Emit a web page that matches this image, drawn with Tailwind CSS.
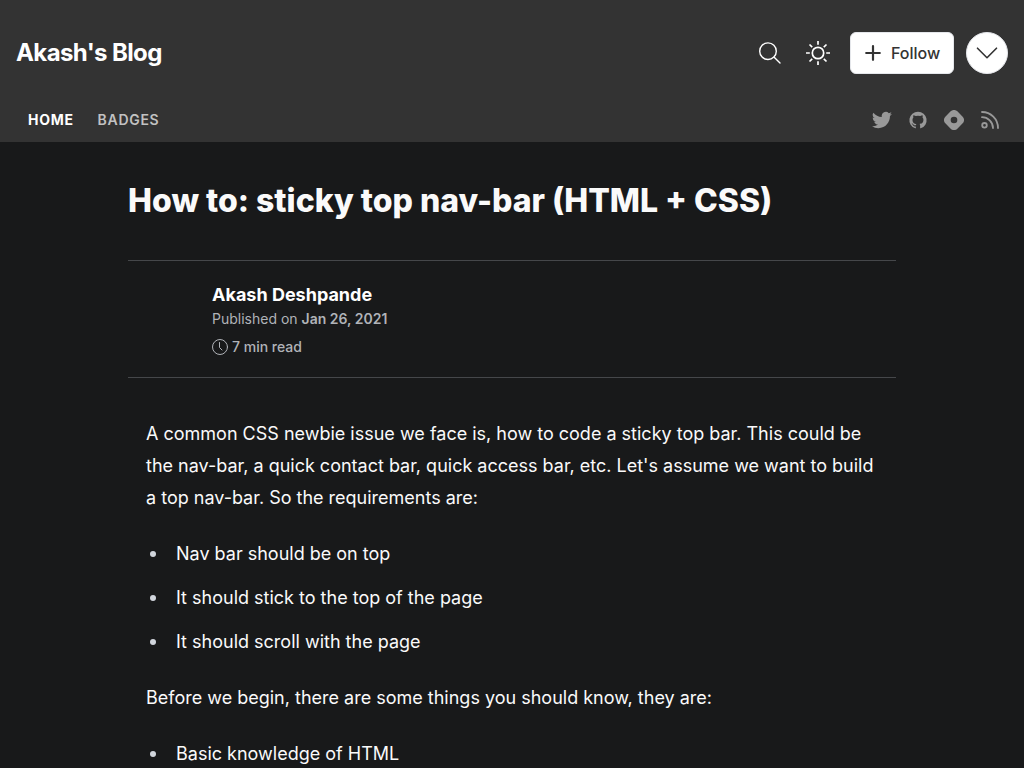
<!DOCTYPE html>
<html lang="en">
<head>
<meta charset="utf-8">
<meta name="viewport" content="width=device-width, initial-scale=1">
<title>How to: sticky top nav-bar (HTML + CSS)</title>
<script src="https://cdn.jsdelivr.net/npm/@tailwindcss/browser@4"></script>
</head>
<body class="bg-[#18191a] font-['Inter',sans-serif] text-white">
<header class="bg-[#333333] pt-8">
  <div class="flex items-center justify-between px-4">
    <a href="#" class="text-2xl font-bold tracking-tight">Akash's Blog</a>
    <div class="flex items-center">
      <button type="button" aria-label="Search" class="mr-3 flex size-9 items-center justify-center">
        <svg class="size-6" viewBox="0 0 24 24" fill="none" stroke="currentColor" stroke-width="1.4" stroke-linecap="round"><circle cx="10" cy="10.200" r="8.300"/><path d="M16.200 16.300 22 22"/></svg>
      </button>
      <button type="button" aria-label="Toggle theme" class="mr-3.5 flex size-9 items-center justify-center">
        <svg class="size-6" viewBox="0 0 24 24" fill="none" stroke="currentColor" stroke-width="1.7"><circle cx="12" cy="12" r="5.700"/><path d="M12 0v3.800M12 20.200v3.800M0 12h3.800M20.200 12h3.800M3.500 3.500l2.700 2.700M17.800 17.800l2.700 2.700M20.500 3.500l-2.700 2.700M6.200 17.800l-2.700 2.700"/></svg>
      </button>
      <button type="button" class="mr-3 flex h-[42px] w-[104px] items-center rounded-md border border-gray-200 bg-white pl-3.5 font-medium text-[#333333]">
        <svg class="mr-2.5 size-4 shrink-0" viewBox="0 0 16 16" fill="none" stroke="currentColor" stroke-width="2.2" stroke-linecap="round"><path d="M8 1.200v13.600M1.200 8h13.600"/></svg>
        Follow
      </button>
      <button type="button" aria-label="More options" class="flex size-[42px] items-center justify-center rounded-full border border-gray-200 bg-white text-[#333333]">
        <svg class="h-3 w-[22px]" viewBox="0 0 22 12" fill="none" stroke="currentColor" stroke-width="1.6" stroke-linecap="round" stroke-linejoin="round"><path d="M1.500 1.200 11 10.700 20.500 1.200"/></svg>
      </button>
    </div>
  </div>
  <div class="mt-6 flex h-11 items-center justify-between pr-6 pl-7">
    <nav class="flex gap-6 text-sm tracking-wider">
      <a href="#" class="font-bold">HOME</a>
      <a href="#" class="font-semibold text-[#c2c2c2]">BADGES</a>
    </nav>
    <div class="flex items-center gap-4 text-[#999999]">
      <a href="#" aria-label="Twitter"><svg class="size-5" viewBox="0 0 24 24" fill="currentColor"><path d="M23.950 4.570a10 10 0 0 1-2.820.770 4.960 4.960 0 0 0 2.160-2.720 9.900 9.900 0 0 1-3.120 1.190 4.920 4.920 0 0 0-8.390 4.480A13.900 13.900 0 0 1 1.640 3.160a4.920 4.920 0 0 0 1.520 6.570 4.900 4.900 0 0 1-2.230-.610v.060a4.930 4.930 0 0 0 3.950 4.830 5 5 0 0 1-2.210.080 4.940 4.940 0 0 0 4.600 3.420A9.870 9.870 0 0 1 0 19.540a13.990 13.990 0 0 0 7.550 2.210c9.050 0 14-7.500 14-13.980 0-.210 0-.420-.020-.630a9.940 9.940 0 0 0 2.420-2.570z"/></svg></a>
      <a href="#" aria-label="GitHub" class="flex size-5 items-center justify-center"><svg class="size-5" viewBox="-2 -2 28 28" fill="currentColor"><path d="M12 .3a12 12 0 0 0-3.800 23.400c.6.100.8-.3.800-.6v-2c-3.300.7-4-1.600-4-1.600-.6-1.400-1.400-1.800-1.400-1.800-1-.7.100-.7.100-.7 1.200 0 1.900 1.200 1.900 1.200 1 1.800 2.800 1.300 3.500 1 0-.8.400-1.300.700-1.600-2.700-.3-5.500-1.300-5.500-6 0-1.200.5-2.300 1.300-3.100-.200-.4-.600-1.600 0-3.200 0 0 1-.3 3.400 1.200a11.500 11.500 0 0 1 6 0c2.300-1.500 3.300-1.200 3.300-1.200.6 1.600.2 2.800 0 3.200.9.800 1.300 1.900 1.300 3.200 0 4.600-2.800 5.600-5.500 5.900.5.400.900 1 .900 2.200v3.300c0 .3.100.7.800.6A12 12 0 0 0 12 .3"/></svg></a>
      <a href="#" aria-label="Hashnode"><svg class="size-5" viewBox="0 0 200 200" fill="currentColor" fill-rule="evenodd"><path d="M13.400 66.400c-18.500 18.500-18.500 48.600 0 67.100l53.100 53.100c18.500 18.500 48.500 18.500 67.100 0l53.100-53.100c18.500-18.500 18.500-48.500 0-67.100l-53.100-53c-18.500-18.500-48.600-18.500-67.100 0l-53.100 53zM133.300 100a33.300 33.300 0 1 1-66.600 0 33.300 33.300 0 0 1 66.600 0z"/></svg></a>
      <a href="#" aria-label="RSS feed" class="flex size-5 items-center justify-center"><svg class="size-[18px]" viewBox="0 0 18 18" fill="none" stroke="currentColor" stroke-width="1.800" stroke-linecap="round"><circle cx="3.500" cy="14.300" r="2.300"/><path d="M1 6.200A11 11 0 0 1 12 17M1 1A16 16 0 0 1 17 17"/></svg></a>
    </div>
  </div>
</header>
<main class="mx-auto max-w-3xl">
  <h1 class="pt-9 pb-9 text-[32px] leading-[46px] font-extrabold text-[#fafafa]">How to: sticky top nav-bar (HTML + CSS)</h1>
  <div class="border-y border-[#45474a] pt-5 pb-[18px] pl-[84px]">
    <a href="#" class="block text-lg leading-7 font-bold">Akash Deshpande</a>
    <p class="text-sm text-[#b0b3b8]">Published on <a href="#" class="font-semibold">Jan 26, 2021</a></p>
    <a href="#" class="mt-1.5 flex items-center gap-1 text-sm leading-6 font-medium text-[#b0b3b8]">
      <svg class="size-4" viewBox="0 0 16 16" fill="none" stroke="currentColor" stroke-linecap="round" stroke-linejoin="round"><circle cx="8" cy="8" r="7.500"/><path d="M7.500 3.500V8.500L10 11"/></svg>
      7 min read
    </a>
  </div>
  <article class="flex flex-col gap-6 px-[18px] pt-10 text-lg leading-8 text-[#fafafa]">
    <p>A common CSS newbie issue we face is, how to code a sticky top bar. This could be the nav-bar, a quick contact bar, quick access bar, etc. Let's assume we want to build a top nav-bar. So the requirements are:</p>
    <ul class="flex flex-col gap-3">
      <li class="flex items-center gap-5 pl-1 before:size-1.5 before:rounded-full before:bg-gray-300">Nav bar should be on top</li>
      <li class="flex items-center gap-5 pl-1 before:size-1.5 before:rounded-full before:bg-gray-300">It should stick to the top of the page</li>
      <li class="flex items-center gap-5 pl-1 before:size-1.5 before:rounded-full before:bg-gray-300">It should scroll with the page</li>
    </ul>
    <p>Before we begin, there are some things you should know, they are:</p>
    <ul class="flex flex-col gap-3">
      <li class="flex items-center gap-5 pl-1 before:size-1.5 before:rounded-full before:bg-gray-300">Basic knowledge of HTML</li>
    </ul>
  </article>
</main>
</body>
</html>
